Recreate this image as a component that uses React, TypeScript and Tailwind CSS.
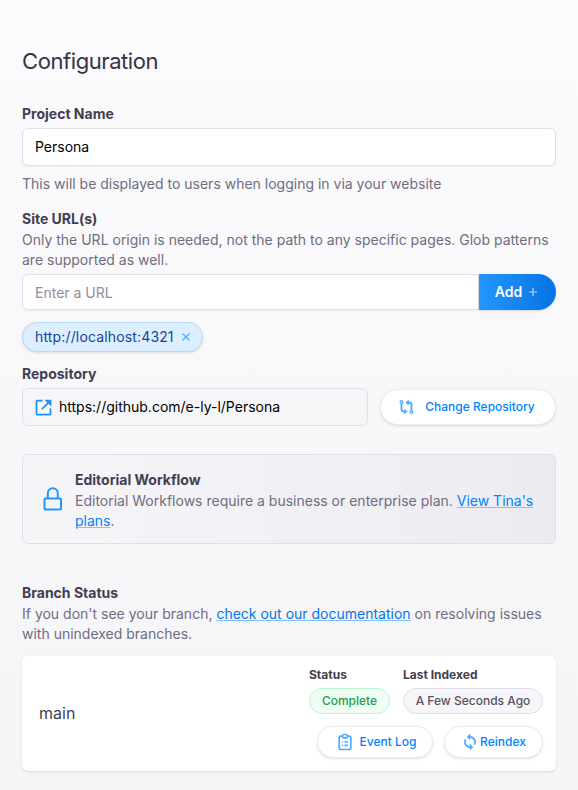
import type { ReactNode } from "react";
import { BiLinkExternal } from "react-icons/bi";
import { HiOutlineClipboardList } from "react-icons/hi";

function Label({ children }: { children: ReactNode }) {
  return <h2 className="text-sm leading-5 font-bold text-[#433e52]">{children}</h2>;
}

function Hint({ children, className = "" }: { children: ReactNode; className?: string }) {
  return <p className={`text-sm leading-5 text-[#716c7f] ${className}`}>{children}</p>;
}

function Link({ children, className }: { children: ReactNode; className: string }) {
  return (
    <a href="#" className={`underline decoration-[#7dc2ff] decoration-1 underline-offset-1 ${className}`}>
      {children}
    </a>
  );
}

function LockIcon() {
  return (
    <svg viewBox="0 0 20 24" className="mr-3 ml-1 h-6 w-5 shrink-0" fill="none" stroke="#2296fe" strokeWidth="2">
      <rect x="1.500" y="11.5" width="16.5" height="11" rx="1" />
      <path d="M4.800 11.5V6.200a5 5 0 0 1 10 0v5.300" />
    </svg>
  );
}

function CompareIcon() {
  return (
    <svg viewBox="0 0 16 16" className="size-4 shrink-0" fill="none" stroke="#4dabff" strokeWidth="1.2">
      <circle cx="2.500" cy="3" r="1.400" />
      <circle cx="12.500" cy="13" r="1.400" />
      <path d="M2.500 4.500v5.500q0 2.500 2.500 2.500h1" strokeWidth="1.800" />
      <path d="M12.500 11.500V6q0-2.500-2.500-2.500H9" strokeWidth="1.800" />
      <path d="M5.300 9.600l3.200 2.900-3.200 2.900zM9.700.6L6.500 3.500l3.200 2.900z" fill="#4dabff" stroke="none" />
    </svg>
  );
}

function SyncIcon() {
  return (
    <svg viewBox="4 1 16 22" className="mr-1 h-4 w-3 shrink-0" fill="#4dabff" stroke="#4dabff" strokeWidth="0.6">
      <path d="M12 4V1L8 5l4 4V6c3.310 0 6 2.690 6 6 0 1.010-.25 1.970-.7 2.800l1.460 1.460C19.540 15.030 20 13.570 20 12c0-4.420-3.580-8-8-8zm0 14c-3.310 0-6-2.690-6-6 0-1.010.25-1.970.7-2.800L5.240 7.740C4.460 8.970 4 10.430 4 12c0 4.420 3.580 8 8 8v3l4-4-4-4v3z" />
    </svg>
  );
}

export default function App() {
  return (
    <main className="h-[790px] w-[578px] overflow-hidden bg-linear-to-b from-[#fbfbfd] to-[#f5f5f8] px-[22px] pt-[46px] font-['Inter',sans-serif]">
      <h1 className="text-[22px] leading-[30px] tracking-[-0.42px] text-[#363145]">Configuration</h1>

      <section className="mt-7">
        <Label>Project Name</Label>
        <input
          defaultValue="Persona"
          className="mt-1 block h-[38px] w-full rounded-md border border-[#e1ddec] bg-white px-3 pb-px text-sm text-black shadow-xs outline-none"
        />
        <Hint className="mt-2">This will be displayed to users when logging in via your website</Hint>
      </section>

      <section className="mt-[15px]">
        <Label>Site URL(s)</Label>
        <Hint className="mt-px">
          Only the URL origin is needed, not the path to any specific pages. Glob patterns are supported as well.
        </Hint>
        <div className="mt-1 flex h-9">
          <input
            placeholder="Enter a URL"
            className="w-[457px] rounded-l-md border border-[#e1ddec] bg-white px-3 pt-0.5 text-sm text-black shadow-xs outline-none placeholder:text-[#918c9e]"
          />
          <button className="flex flex-1 items-center justify-center gap-[7px] rounded-r-full bg-linear-to-r from-[#2296fe] to-[#0574e4] pr-[3px] text-sm font-semibold text-white shadow-sm">
            Add
            <svg viewBox="0 0 8 8" className="size-2" stroke="#b4dbff" strokeWidth="1.2">
              <path d="M4 0v8M0 4h8" />
            </svg>
          </button>
        </div>
        <div className="mt-3 flex h-[30px] w-[181px] items-center justify-between rounded-full border border-[#b4dbff] bg-[#dceeff] px-3 text-sm tracking-[0.15px] text-[#144696] shadow-sm">
          http://localhost:4321
          <svg viewBox="0 0 8 8" className="size-2" stroke="#48a8ff" strokeWidth="1.2">
            <path d="M.5.5l7 7M7.5.5l-7 7" />
          </svg>
        </div>
      </section>

      <section className="mt-3">
        <Label>Repository</Label>
        <div className="mt-1 flex items-center gap-3">
          <div className="flex h-[38px] w-[346px] items-center gap-[5px] rounded-md border border-[#e1ddec] bg-[#f6f6f9] pl-[10px] text-sm text-black">
            <BiLinkExternal className="size-[21px] text-[#1a91fe]" />
            https://github.com/e-ly-l/Persona
          </div>
          <button className="flex h-9 flex-1 items-center justify-center gap-2.5 rounded-full border border-[#edecf3] bg-white pr-0.5 text-xs font-medium text-[#0084ff] shadow-sm">
            <CompareIcon />
            Change Repository
          </button>
        </div>
      </section>

      <section className="mt-7 flex h-[90px] items-center rounded-md border border-[#e1ddec] bg-linear-to-r from-[#f6f6f9] to-[#ecebf1] pr-4 pl-4">
        <LockIcon />
        <div className="pt-0.5">
          <Label>Editorial Workflow</Label>
          <Hint className="mt-px">
            Editorial Workflows require a business or enterprise plan.{" "}
            <Link className="text-[#0084ff]">View Tina's plans</Link>.
          </Hint>
        </div>
      </section>

      <section className="mt-[39px]">
        <Label>Branch Status</Label>
        <Hint className="mt-px">
          If you don't see your branch, <Link className="text-[#0574e4]">check out our documentation</Link> on
          resolving issues with unindexed branches.
        </Hint>
        <div className="mt-3 flex h-[115px] items-center justify-between rounded-md bg-white pr-[13px] pb-0.5 pl-[17px] shadow-sm">
          <span className="text-base text-[#433e52]">main</span>
          <div className="flex flex-col items-end gap-3">
            <div className="flex gap-[13px] text-xs font-medium">
              <div>
                <h3 className="mb-[5px] -mt-px leading-4 font-bold text-[#433e52]">Status</h3>
                <span className="flex h-[26px] w-[81px] items-center justify-center rounded-full border border-[#bbf7d0] bg-[#f0fdf4] text-[#16a34a]">
                  Complete
                </span>
              </div>
              <div>
                <h3 className="mb-[5px] -mt-px leading-4 font-bold text-[#433e52]">Last Indexed</h3>
                <span className="flex h-[26px] w-[140px] items-center justify-center rounded-full border border-[#e1ddec] bg-[#f6f6f9] text-[#565165]">
                  A Few Seconds Ago
                </span>
              </div>
            </div>
            <div className="flex gap-[11px] text-xs font-medium text-[#0084ff]">
              <button className="flex h-8 w-[116px] items-center justify-center gap-[5px] rounded-full border border-[#edecf3] bg-white pl-px shadow-sm">
                <HiOutlineClipboardList className="size-5 text-[#4dabff]" />
                Event Log
              </button>
              <button className="flex h-8 w-[99px] items-center justify-center rounded-full border border-[#edecf3] bg-white pl-[3px] shadow-sm">
                <SyncIcon />
                Reindex
              </button>
            </div>
          </div>
        </div>
      </section>
    </main>
  );
}
